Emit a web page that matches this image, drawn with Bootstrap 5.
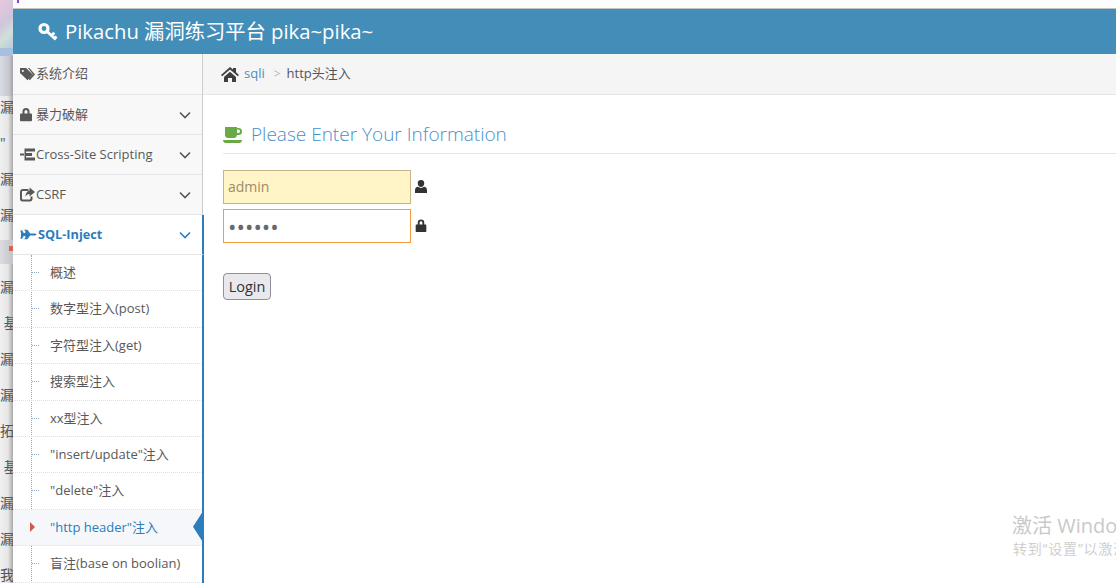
<!DOCTYPE html>
<html lang="zh-CN">
<head>
    <meta charset="UTF-8">
    <meta name="viewport" content="width=device-width, initial-scale=1.0">
    <title>Pikachu 漏洞练习平台</title>
    <link href="https://cdn.jsdelivr.net/npm/bootstrap@5.3.0/dist/css/bootstrap.min.css" rel="stylesheet">
    <style>
        html, body { height: 583px; overflow: hidden; }
        body {
            font-family: "Open Sans", "Noto Sans CJK SC", sans-serif;
            font-size: 13px;
            color: #585858;
            background: #fff;
        }
        .behind-strip {
            width: 13px;
            height: 583px;
            padding-top: 89px;
            overflow: hidden;
            background: linear-gradient(to right, #f0f0f0 0, #e6e6e6 8px, #a9a9a9 13px);
            color: #555;
            font-size: 14px;
            line-height: 36px;
            white-space: nowrap;
            position: relative;
        }
        .behind-top {
            position: absolute;
            top: 0; left: 0; right: 0;
            height: 48px;
            background: linear-gradient(135deg, #e8c8dc, #cfc6dc 45%, #cfe0d8 70%, #b9c9dc);
        }
        .behind-band {
            position: absolute;
            top: 48px; left: 0; right: 0;
            height: 8px;
            background: #a8c0e0;
        }
        .behind-pale {
            position: absolute;
            top: 56px; left: 0; right: 0;
            height: 40px;
            background: linear-gradient(to right, #d8dce6, #c6c8d0 9px, #a4a4a8);
        }
        .behind-row {
            position: absolute;
            top: 240px; left: 0; right: 0;
            height: 24px;
            background: linear-gradient(to right, #dcdce0, #c4c4c8);
        }
        .behind-red {
            position: absolute;
            top: 246px; left: 9px; right: 0;
            height: 5px;
            background: #d8664e;
        }
        .behind-strip > div:not([class]) { position: relative; }
        .top-gap {
            height: 9px;
            background: #fdfdfd;
            border-bottom: 1px solid #c4c4c4;
        }
        .top-mark { width: 2px; height: 3px; margin-left: 4px; background: #8a3fe0; }
        .app-bar {
            height: 45px;
            background: #438eb9;
            color: #fff;
            font-size: 20.3px;
            padding-left: 25px;
            gap: 7px;
        }
        .side-menu {
            width: 190px;
            flex: none;
            height: 529px;
            background: #f8f8f8;
            border-right: 1px solid #ccc;
            position: relative;
        }
        .menu-top {
            height: 40px;
            border-bottom: 1px solid #e5e5e5;
            padding: 0 11px 0 7px;
            color: #585858;
        }
        .menu-first { height: 41px; }
        .menu-open {
            background: #fff;
            color: #2b7dbc;
            font-weight: 700;
            font-size: 12.7px;
            border-right: 2px solid #2b7dbc;
            margin-right: -2px;
        }
        .menu-ico { width: 15px; height: 15px; flex: none; margin-right: 1px; fill: currentColor; }
        .menu-wide { width: 17px; margin-right: 1px; }
        .menu-chev { width: 12px; height: 8px; margin-left: auto; fill: none; stroke: currentColor; stroke-width: 1.6; }
        .sub-menu {
            background: #fff;
            border-right: 2px solid #2b7dbc;
            margin-right: -2px;
            padding: 0;
            list-style: none;
            position: relative;
        }
        .sub-menu::before {
            content: "";
            position: absolute;
            top: 0; bottom: 0; left: 18px;
            border-left: 1px dotted #8fa9c4;
        }
        .sub-item {
            height: 36.4px;
            padding-left: 37px;
            border-bottom: 1px dotted #e0e0e0;
            position: relative;
            display: flex;
            align-items: center;
        }
        .sub-item::before {
            content: "";
            position: absolute;
            top: 17px; left: 19px;
            width: 7px;
            border-top: 1px dotted #8fa9c4;
        }
        .sub-active { background: #f5f7fb; color: #2b7dbc; }
        .sub-active::before {
            top: 12px; left: 17px;
            width: 0;
            border-top: 5px solid transparent;
            border-bottom: 5px solid transparent;
            border-left: 5px solid #d15b47;
        }
        .sub-active::after {
            content: "";
            position: absolute;
            top: 3px; right: 0;
            width: 9px; height: 28px;
            background: #2b7dbc;
            clip-path: polygon(100% 0, 100% 100%, 0 50%);
        }
        .crumb-bar {
            height: 41px;
            background: #f5f5f5;
            border-bottom: 1px solid #e5e5e5;
            padding-left: 18px;
        }
        .crumb-link { color: #4c8fbd; margin: 0 9px 0 5px; text-decoration: none; }
        .crumb-sep { color: #b2b6bf; margin-right: 6px; font-size: 12px; }
        .crumb-now { color: #555; }
        .page-area { padding: 23px 0 0 20px; }
        .form-title {
            color: #478fca;
            font-size: 19px;
            font-weight: 300;
            height: 36px;
            margin: 0 0 16px;
            padding-bottom: 2px;
            border-bottom: 1px solid #dce8f1;
            gap: 8px;
        }
        .pw-row { gap: 4px; margin-bottom: 5px; }
        .pw-input {
            width: 188px;
            height: 34px;
            padding: 0 4px 2px;
            font-size: 14px;
            color: #858585;
            border: 1px solid #d5d5d5;
            outline: 0;
            border-radius: 0;
        }
        .pw-name { background: #fff5c6; border-color: #c8b488; color: #a08a68; }
        .pw-pass { border-color: #f59942; color: #696969; font-size: 22.5px; padding-bottom: 0; }
        .pw-ico { width: 12px; height: 13px; fill: #333; margin-top: -2px; }
        .login-btn {
            margin-top: 25px;
            width: 48px;
            height: 27px;
            padding: 0;
            font-size: 14.5px;
            color: #333;
            background: #e9e9ed;
            border: 1px solid #8f8f9d;
            border-radius: 4px;
        }
        .win-mark {
            position: absolute;
            left: 1012px; top: 512px;
            white-space: nowrap;
            color: #c9c9c9;
            font-size: 20px;
            line-height: 28px;
        }
        .win-mark div { font-size: 14px; line-height: 18px; color: #cfcfcf; letter-spacing: .8px; margin-left: 1px; }
    </style>
</head>
<body class="d-flex">

<svg width="0" height="0" class="position-absolute">
    <symbol id="i-lock" viewBox="0 0 12 14"><path d="M2.500 6V4a3.500 3.500 0 0 1 7 0v2h1.300c.7 0 1.200.5 1.200 1.200v5.600c0 .7-.5 1.200-1.200 1.200H1.200C.5 14 0 13.500 0 12.800V7.200C0 6.500.5 6 1.200 6zm2 0h3V4a1.500 1.500 0 0 0-3 0z"/></symbol>
</svg>

<!-- window behind the browser -->
<div class="behind-strip flex-none">
    <div class="behind-top"></div><div class="behind-band"></div><div class="behind-pale"></div>
    <div class="behind-row"></div><div class="behind-red"></div>
    <div>漏</div><div>"</div><div>漏</div><div>漏</div><div>&nbsp;</div><div>漏</div>
    <div>&nbsp;基</div><div>漏</div><div>漏</div><div>拓</div><div>&nbsp;基</div><div>漏</div><div>漏</div><div>我</div>
</div>

<div class="flex-grow-1 d-flex flex-column">
    <div class="top-gap"><div class="top-mark"></div></div>
    <div class="app-bar d-flex align-items-center">
        <svg width="20" height="20" viewBox="0 0 20 20" fill="none" stroke="#fff"><circle cx="6" cy="6.500" r="4" stroke-width="3.200"/><path d="M9 9.500l8.800 8M13.500 13.500l2.800-2.800M16.500 16.500l2-2" stroke-width="2.800"/></svg>
        <span>Pikachu 漏洞练习平台 pika~pika~</span>
    </div>
    <div class="d-flex flex-grow-1">
        <div class="side-menu">
            <div class="menu-top menu-first d-flex align-items-center">
                <svg class="menu-ico" viewBox="0 0 16 14"><path d="M0 0h6.500l7 7-5.500 6-8-7.500zM3 2.200a1 1 0 1 0 .01 0zM8.500 0h1.500l6 7-5.500 6-1.200-1.200 4.500-4.800z"/></svg>系统介绍
            </div>
            <div class="menu-top d-flex align-items-center">
                <svg class="menu-ico" viewBox="0 0 15 14"><use href="#i-lock" width="12" height="14"/></svg>暴力破解
                <svg class="menu-chev" viewBox="0 0 12 8"><path d="M1 1.500l5 5 5-5"/></svg>
            </div>
            <div class="menu-top d-flex align-items-center">
                <svg class="menu-ico" viewBox="0 0 15 14"><path d="M0 6h4v2H0zM4.500 1H6v12H4.500zM6 1h9v3H6zM6 5.500h6v3H6zM6 10h9v3H6z"/></svg>Cross-Site Scripting
                <svg class="menu-chev" viewBox="0 0 12 8"><path d="M1 1.500l5 5 5-5"/></svg>
            </div>
            <div class="menu-top d-flex align-items-center">
                <svg class="menu-ico" viewBox="0 0 15 14"><path d="M3 1.500h5.500v2H3c-.6 0-1 .4-1 1V11c0 .6.400 1 1 1h6.500c.6 0 1-.4 1-1V9h2v2.500c0 1.500-1 2.500-2.500 2.500H2.500C1 14 0 13 0 11.500V4.500C0 2.700 1.200 1.500 3 1.500zM9.500 0L15 4.500 9.500 9V6.500C7.500 6.500 6.200 7.500 5.500 9.500 5.300 6 7 3.500 9.500 3z"/></svg>CSRF
                <svg class="menu-chev" viewBox="0 0 12 8"><path d="M1 1.500l5 5 5-5"/></svg>
            </div>
            <div class="menu-top menu-open d-flex align-items-center">
                <svg class="menu-ico menu-wide" viewBox="0 0 15 14"><path d="M0 3h1.500l1.500 2.500h1.500V3.500L3.500 3V2.500h3L9 6h3c2 0 3 .5 3 1s-1 1-3 1H9l-2.500 3.500h-3V11l1-.5V8.500H3L1.500 11H0l.5-3V6z"/></svg><span>SQL-Inject</span>
                <svg class="menu-chev" viewBox="0 0 12 8"><path d="M1 1.500l5 5 5-5"/></svg>
            </div>
            <ul class="sub-menu">
                <li class="sub-item">概述</li>
                <li class="sub-item">数字型注入(post)</li>
                <li class="sub-item">字符型注入(get)</li>
                <li class="sub-item">搜索型注入</li>
                <li class="sub-item">xx型注入</li>
                <li class="sub-item">"insert/update"注入</li>
                <li class="sub-item">"delete"注入</li>
                <li class="sub-item sub-active">"http header"注入</li>
                <li class="sub-item">盲注(base on boolian)</li>
            </ul>
        </div>
        <div class="flex-grow-1">
            <div class="crumb-bar d-flex align-items-center">
                <svg width="18" height="15" viewBox="0 0 18 15" fill="#3f3f3f"><path d="M9 0l3 2.600V1h3v4.200L18 8l-1.200 1.300L9 2.500 1.200 9.300 0 8zM3 10l6-5.200 6 5.200v5h-4v-4H7v4H3z"/></svg>
                <a href="#" class="crumb-link">sqli</a>
                <span class="crumb-sep">&gt;</span>
                <span class="crumb-now">http头注入</span>
            </div>
            <div class="page-area">
                <h4 class="form-title d-flex align-items-center">
                    <svg width="20" height="16" viewBox="0 0 20 16" fill="#69aa46"><path d="M2 0h12v1h1.500a3.500 3.500 0 0 1 0 7H14c-.3 2-1.500 3-3 3H5c-2 0-3-1.500-3-3zM14 2.500V6h1.300a1.700 1.700 0 0 0 0-3.500zM0 13h19c0 1.500-1 3-2.500 3h-14C1 16 0 14.500 0 13z"/></svg>
                    <span>Please Enter Your Information</span>
                </h4>
                <form action="#">
                    <div class="pw-row d-flex align-items-center">
                        <input type="text" class="pw-input pw-name" value="admin">
                        <svg class="pw-ico" viewBox="0 0 12 13"><path d="M6 0a3.200 3.200 0 0 1 3.200 3.400C9.200 5.500 7.800 7 6 7S2.800 5.500 2.800 3.400A3.200 3.200 0 0 1 6 0zM3 6.800c.8.700 1.800 1.100 3 1.100s2.200-.4 3-1.100c1.800.2 3 1.400 3 3.400V13H0v-2.800c0-2 1.200-3.200 3-3.400z"/></svg>
                    </div>
                    <div class="pw-row d-flex align-items-center">
                        <input type="password" class="pw-input pw-pass" value="123456">
                        <svg class="pw-ico" viewBox="0 0 12 14"><use href="#i-lock"/></svg>
                    </div>
                    <button type="button" class="login-btn">Login</button>
                </form>
            </div>
        </div>
    </div>
</div>

<div class="win-mark">激活 Windows<div>转到“设置”以激活 Windows</div></div>

</body>
</html>
